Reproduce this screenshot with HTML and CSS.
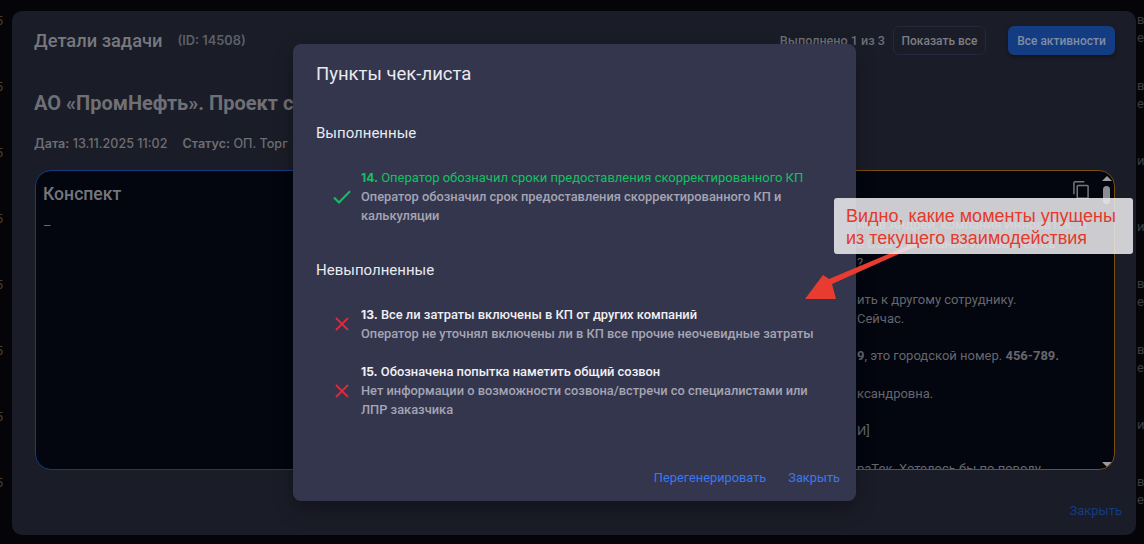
FILE: index.html
```html
<!DOCTYPE html>
<html lang="ru">
<head>
<meta charset="utf-8">
<title>Пункты чек-листа</title>
<link rel="stylesheet" href="styles.css">
</head>
<body>
<div class="edge edge-left"><span>5</span><span>5</span><span>5</span><span>5</span><span>5</span><span>5</span><span>5</span><span>5</span></div>
<main class="panel">
  <header class="panel-head">
    <div class="head-left">
      <h1 class="panel-title">Детали задачи</h1>
      <span class="task-id">(ID: 14508)</span>
    </div>
    <div class="head-right">
      <span class="progress">Выполнено 1 из 3</span>
      <button class="btn btn-outline">Показать все</button>
      <button class="btn btn-fill">Все активности</button>
    </div>
  </header>
  <h2 class="task-name">АО «ПромНефть». Проект са</h2>
  <div class="meta">
    <span><b>Дата:</b> 13.11.2025 11:02</span>
    <span><b>Статус:</b> ОП. Торг</span>
  </div>
  <section class="cards">
    <article class="card card-blue">
      <h3 class="card-title">Конспект</h3>
      <p class="card-dash">–</p>
    </article>
    <article class="card card-orange">
      <svg class="copy-icon" viewBox="0 0 24 24" width="20" height="20"><path fill="none" stroke="#77787c" stroke-width="1.800" d="M16 2H5a1.500 1.500 0 0 0-1.500 1.500V17M8.500 6.500h11a1 1 0 0 1 1 1V21a1 1 0 0 1-1 1h-11a1 1 0 0 1-1-1V7.500a1 1 0 0 1 1-1z"/></svg>
      <div class="scrollbar"><i class="arrow-up"></i><i class="thumb"></i><i class="arrow-down"></i></div>
      <div class="transcript">
        <p>исов Андрей, компания ИнноваТек. Я</p>
        <p>е СЭЗ о компании ИнноваТек на</p>
        <p>?</p>
        <p>&nbsp;</p>
        <p>ить к другому сотруднику.</p>
        <p>Сейчас.</p>
        <p>&nbsp;</p>
        <p><b>9</b>, это городской номер. <b>456-789.</b></p>
        <p>&nbsp;</p>
        <p>ксандровна.</p>
        <p>&nbsp;</p>
        <p>И]</p>
        <p>&nbsp;</p>
        <p>раТек. Хотелось бы по поводу</p>
      </div>
    </article>
  </section>
  <footer class="panel-foot"><a class="link-dim">Закрыть</a></footer>
</main>
<div class="edge edge-right">
  <div class="edge-row"><span>в</span><span>е.</span></div>
  <div class="edge-row"><span>в</span><span>е.</span></div>
  <div class="edge-row"><span>и</span></div>
  <div class="edge-row"><span>и</span></div>
  <div class="edge-row"><span>в</span><span>е.</span></div>
  <div class="edge-row"><span>в</span><span>е.</span></div>
  <div class="edge-row"><span>и</span></div>
  <div class="edge-row"><span>в</span><span>е.</span></div>
</div>

<aside class="modal">
  <h2 class="modal-title">Пункты чек-листа</h2>
  <h3 class="group-title">Выполненные</h3>
  <div class="item item-first">
    <svg class="item-icon" viewBox="0 0 18 14" width="18" height="14"><path fill="none" stroke="#12c25f" stroke-width="2" d="M1 7.500l5 5L17 1.200"/></svg>
    <div>
      <div class="item-title item-done"><b>14.</b> Оператор обозначил сроки предоставления скорректированного КП</div>
      <div class="item-text">Оператор обозначил срок предоставления скорректированного КП и калькуляции</div>
    </div>
  </div>
  <h3 class="group-title group-second">Невыполненные</h3>
  <div class="item item-first">
    <svg class="item-icon" viewBox="0 0 14 14" width="18" height="14"><path fill="none" stroke="#e2283c" stroke-width="1.800" d="M1 1l12 12M13 1L1 13"/></svg>
    <div>
      <div class="item-title"><b>13.</b> Все ли затраты включены в КП от других компаний</div>
      <div class="item-text">Оператор не уточнял включены ли в КП все прочие неочевидные затраты</div>
    </div>
  </div>
  <div class="item item-next">
    <svg class="item-icon" viewBox="0 0 14 14" width="18" height="14"><path fill="none" stroke="#e2283c" stroke-width="1.800" d="M1 1l12 12M13 1L1 13"/></svg>
    <div>
      <div class="item-title"><b>15.</b> Обозначена попытка наметить общий созвон</div>
      <div class="item-text">Нет информации о возможности созвона/встречи со специалистами или ЛПР заказчика</div>
    </div>
  </div>
  <div class="modal-foot">
    <a class="link">Перегенерировать</a>
    <a class="link">Закрыть</a>
  </div>
</aside>

<svg class="pointer" viewBox="0 0 140 70" width="140" height="70"><polygon fill="#e83c30" points="0,64 18,40 24,44 112,7 114,10 27,49 31,64"/></svg>
<div class="note">Видно, какие моменты упущены<br>из текущего взаимодействия</div>
</body>
</html>
```
FILE: styles.css
```css
* { box-sizing: border-box; }
html, body { margin: 0; height: 544px; overflow: hidden; }
body {
  background: #050509;
  font-family: Roboto, "Noto Sans", sans-serif;
  position: relative;
  padding: 11px 8px 9px 12px;
  color: #85868c;
}
h1, h2, h3, p { margin: 0; font-weight: 400; }
button { font: inherit; }

.edge {
  position: absolute;
  top: 0;
  bottom: 0;
  overflow: hidden;
  font-size: 13px;
  display: flex;
  flex-direction: column;
}
.edge-left { left: -6px; width: 9px; color: #4a3f2c; text-align: right; padding-top: 12px; gap: 49px; }
.edge-left span { line-height: 17px; }
.edge-right { left: 1137px; width: 7px; padding-top: 11px; color: #3c3d40; }
.edge-row { height: 66px; flex: none; }
.edge-row span { display: block; line-height: 18px; }
.edge-row span:only-child { padding-top: 9px; }

.panel {
  height: 100%;
  background: #1a1c27;
  border-radius: 10px;
  padding: 15px 21px 0 22px;
  display: flex;
  flex-direction: column;
}
.panel-head { display: flex; justify-content: space-between; align-items: center; height: 29px; }
.head-left { display: flex; align-items: center; gap: 15px; }
.panel-title { font-size: 18.300px; font-weight: 500; color: #77787e; }
.task-id { font-family: Inter, sans-serif; font-size: 12.800px; font-weight: 600; color: #5e5f67; }
.head-right { display: flex; align-items: center; }
.progress { font-size: 12.600px; font-weight: 500; color: #6d6e75; margin-right: 8px; }
.btn { height: 29px; border-radius: 6px; font-size: 12px; font-weight: 500; padding: 0; }
.btn-outline { width: 93px; background: transparent; border: 1px solid #25283c; color: #7d7e84; margin-right: 22px; }
.btn-fill { width: 107px; background: #143c82; border: 0; color: #7f8da5; box-shadow: 0 2px 4px rgba(0,0,0,.3); }

.task-name { font-size: 20px; font-weight: 700; color: #6f7076; margin-top: 36px; line-height: 24px; white-space: nowrap; }
.meta { display: flex; gap: 15px; font-family: Inter, sans-serif; font-size: 12.600px; font-weight: 500; color: #6d6e74; margin-top: 21px; line-height: 16px; }
.meta b { font-weight: 600; }

.cards { display: grid; grid-template-columns: 1fr 1fr; gap: 16px; margin: 18px 0 0 1px; height: 300px; }
.card { position: relative; background: #03050f; border-radius: 16px; overflow: hidden; }
.card-blue { border: 1px solid #143c82; padding: 11px 7px; }
.card-orange { border: 1px solid #7a4f0a; }
.card-title { font-size: 17.600px; font-weight: 500; color: #75767c; line-height: 24px; }
.card-dash { font-size: 13px; color: #6a6b70; margin-top: 12px; }
.copy-icon { position: absolute; top: 9px; right: 23px; }
.scrollbar { position: absolute; top: 5px; right: 1px; bottom: 2px; width: 12px; }
.arrow-up, .arrow-down { position: absolute; left: 1px; width: 0; height: 0; border-left: 5px solid transparent; border-right: 5px solid transparent; }
.arrow-up { top: 0; border-bottom: 5px solid #9c9ca0; }
.arrow-down { bottom: 0; border-top: 5px solid #9c9ca0; }
.thumb { position: absolute; top: 10px; left: 2px; width: 7px; height: 18px; background: #8e8e92; border-radius: 3.500px; }

.transcript {
  position: absolute;
  top: 45px;
  left: 273px;
  width: 250px;
  font-size: 13px;
  line-height: 18.750px;
  font-weight: 500;
  color: #66676d;
  white-space: nowrap;
}

.panel-foot { display: flex; justify-content: flex-end; margin-top: 33px; }
.link-dim { font-size: 13px; color: #143c82; margin-right: -7px; }

.modal {
  position: absolute;
  left: 293px;
  top: 44px;
  width: 563px;
  height: 457px;
  background: #34364e;
  border-radius: 8px;
  padding: 18px 16px 0 23px;
  display: flex;
  flex-direction: column;
  box-shadow: 0 8px 20px rgba(0,0,0,.3);
}
.modal-title { font-size: 18.500px; font-weight: 400; line-height: 24px; color: #e9e9ee; }
.group-title { font-size: 15px; font-weight: 400; line-height: 20px; color: #e9e9ee; margin-top: 37px; }
.group-second { margin-top: 35px; }
.item { display: flex; align-items: center; gap: 10px; padding-left: 17px; }
.item-first { margin-top: 25px; }
.item-next { margin-top: 19px; }
.item-icon { flex: none; }
.item-title { font-size: 12.900px; font-weight: 500; line-height: 19px; color: #f0f0f3; }
.item-title b { font-family: Inter, sans-serif; font-size: 12px; font-weight: 700; }
.item-done { color: #12c25f; font-weight: 400; font-size: 13px; }
.item-text { font-size: 12.850px; font-weight: 500; line-height: 19px; color: #a4a5b2; width: 470px; }
.modal-foot { margin-top: auto; height: 32px; display: flex; justify-content: flex-end; gap: 22px; }
.link { font-size: 12.800px; color: #3a78ef; line-height: 18px; }

.pointer { position: absolute; left: 805px; top: 235px; }
.note {
  position: absolute;
  left: 834px;
  top: 198px;
  width: 299px;
  height: 56px;
  background: rgba(232,232,236,.88);
  border-radius: 3px;
  padding: 7px 12px;
  font-family: "Liberation Sans", Arial, sans-serif;
  font-size: 18px;
  line-height: 22px;
  color: #e5392c;
  white-space: nowrap;
}
```
